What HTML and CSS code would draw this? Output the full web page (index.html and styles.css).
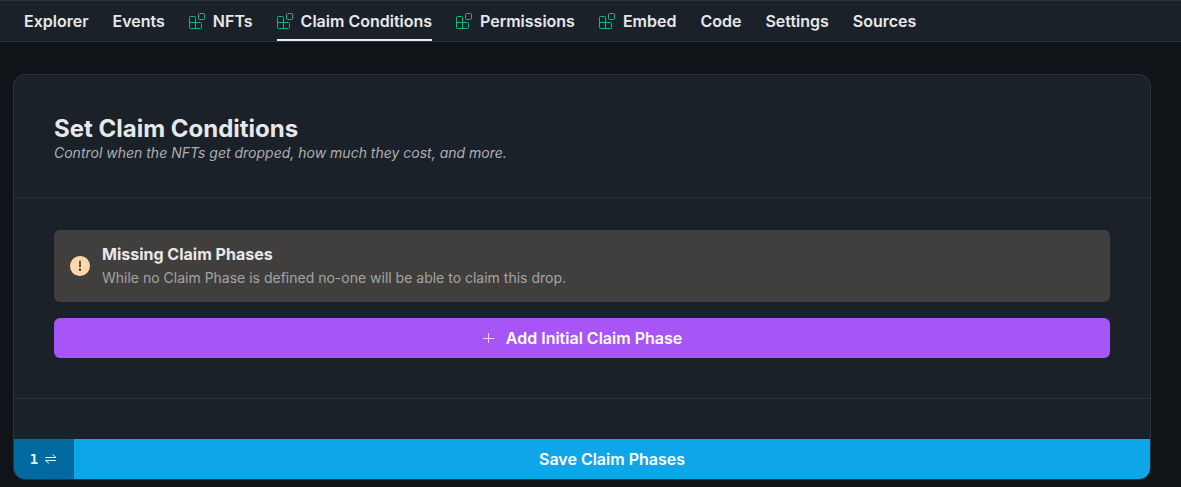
FILE: index.html
```html
<!DOCTYPE html>
<html lang="en">
<head>
    <meta charset="UTF-8">
    <meta name="viewport" content="width=device-width, initial-scale=1.0">
    <title>Claim Conditions</title>
    <link rel="stylesheet" href="styles.css">
</head>
<body>
    <!-- Extension icon shared by the nav links -->
    <svg class="sprite" aria-hidden="true">
        <symbol id="extension" viewBox="0 0 16 16">
            <path d="M1.5 3.5h4a1 1 0 0 1 1 1v5h5a1 1 0 0 1 1 1v4a1 1 0 0 1-1 1h-10a1 1 0 0 1-1-1v-10a1 1 0 0 1 1-1zM.5 9.5h6v6"/>
            <rect x="9.5" y=".5" width="6" height="6" rx="1"/>
        </symbol>
    </svg>

    <nav class="tabs">
        <a href="#explorer">Explorer</a>
        <a href="#events">Events</a>
        <a href="#nfts"><svg class="ext-icon"><use href="#extension"/></svg>NFTs</a>
        <a href="#claim-conditions" class="active" aria-current="page"><svg class="ext-icon"><use href="#extension"/></svg>Claim Conditions</a>
        <a href="#permissions"><svg class="ext-icon"><use href="#extension"/></svg>Permissions</a>
        <a href="#embed"><svg class="ext-icon"><use href="#extension"/></svg>Embed</a>
        <a href="#code">Code</a>
        <a href="#settings">Settings</a>
        <a href="#sources">Sources</a>
    </nav>

    <main class="card">
        <header class="card-header">
            <h1>Set Claim Conditions</h1>
            <p>Control when the NFTs get dropped, how much they cost, and more.</p>
        </header>

        <section class="card-body">
            <div class="alert" role="alert">
                <svg class="alert-icon" viewBox="0 0 24 24" aria-hidden="true">
                    <path fill="currentColor" d="M11.983 0a12.206 12.206 0 0 0-8.51 3.653A11.8 11.8 0 0 0 0 12.207 11.779 11.779 0 0 0 11.8 24h.214A12.111 12.111 0 0 0 24 11.791 11.766 11.766 0 0 0 11.983 0zM10.5 16.542a1.476 1.476 0 0 1 1.449-1.53h.027a1.527 1.527 0 0 1 1.523 1.47 1.475 1.475 0 0 1-1.449 1.53h-.027a1.529 1.529 0 0 1-1.523-1.47zM11 12.5v-6a1 1 0 0 1 2 0v6a1 1 0 1 1-2 0z"/>
                </svg>
                <div>
                    <h2>Missing Claim Phases</h2>
                    <p>While no Claim Phase is defined no-one will be able to claim this drop.</p>
                </div>
            </div>
            <button type="button" class="add-button">
                <svg class="plus-icon" viewBox="0 0 14 14" aria-hidden="true"><path d="M6.5 2v10M1 7.5h11"/></svg>
                Add Initial Claim Phase
            </button>
        </section>

        <footer class="card-footer">
            <button type="button" class="tx-button">
                <span>1</span>
                <svg class="tx-icon" viewBox="0 0 14 14" aria-hidden="true"><path d="M1.5 5.5h10.5L8.500 2.500M12 8.500h-10.500L5 11.500"/></svg>
            </button>
            <button type="submit" class="save-button">Save Claim Phases</button>
        </footer>
    </main>
</body>
</html>
```

FILE: styles.css
```css
* {
    box-sizing: border-box;
    margin: 0;
    padding: 0;
}

body {
    font-family: Inter, sans-serif;
    font-size: 16px;
    line-height: 24px;
    color: #e8e8ea;
    background-color: #101318;
}

.sprite {
    display: none;
}

/* Nav */
.tabs {
    display: flex;
    gap: 24px;
    padding: 0 24px;
    background: #1b2129;
    border-top: 1px solid #2e343b;
    border-bottom: 1px solid #2e343b;
}

.tabs a {
    display: flex;
    align-items: center;
    gap: 8px;
    height: 40px;
    font-weight: 600;
    color: inherit;
    text-decoration: none;
    white-space: nowrap;
}

.tabs a.active {
    box-shadow: inset 0 -2px #ededef;
}

.ext-icon {
    width: 16px;
    height: 16px;
    fill: none;
    stroke: #10b981;
}

/* Card */
.card {
    margin: 32px 30px 0 13px;
    background: #1b2129;
    border: 1px solid #2e343b;
    border-radius: 12px;
    overflow: hidden;
}

.card-header {
    padding: 40px 40px 34px;
    border-bottom: 1px solid #2a3037;
}

.card-header h1 {
    font-size: 24px;
    font-weight: 700;
    line-height: 28px;
}

.card-header p {
    font-size: 14px;
    font-style: italic;
    line-height: 20px;
    color: #adafb3;
}

.card-body {
    display: flex;
    flex-direction: column;
    gap: 16px;
    padding: 32px 40px 40px;
    border-bottom: 1px solid #2a3037;
}

.alert {
    display: flex;
    align-items: center;
    gap: 12px;
    padding: 12px 16px;
    background: #413f3d;
    border-radius: 6px;
}

.alert-icon {
    width: 20px;
    height: 20px;
    color: #fed7aa;
}

.alert h2 {
    font-size: 16px;
    font-weight: 700;
}

.alert p {
    font-size: 14px;
    color: #a4a4a5;
}

button {
    display: flex;
    align-items: center;
    justify-content: center;
    height: 40px;
    border: none;
    font: inherit;
    font-weight: 600;
    color: white;
    cursor: pointer;
}

.add-button {
    gap: 10px;
    background: #a855f7;
    border-radius: 6px;
}

.plus-icon {
    width: 14px;
    height: 14px;
    fill: none;
    stroke: #e9d5fd;
}

.card-footer {
    display: flex;
    padding-top: 40px;
}

.tx-button {
    gap: 6px;
    width: 60px;
    font-family: "DejaVu Sans Mono", monospace;
    font-size: 14px;
    font-weight: 700;
    color: #e6f0f6;
    background: #0369a1;
}

.tx-icon {
    width: 14px;
    height: 14px;
    fill: none;
    stroke: #e6f0f6;
}

.save-button {
    flex: 1;
    background: #0ea5e9;
}
```
